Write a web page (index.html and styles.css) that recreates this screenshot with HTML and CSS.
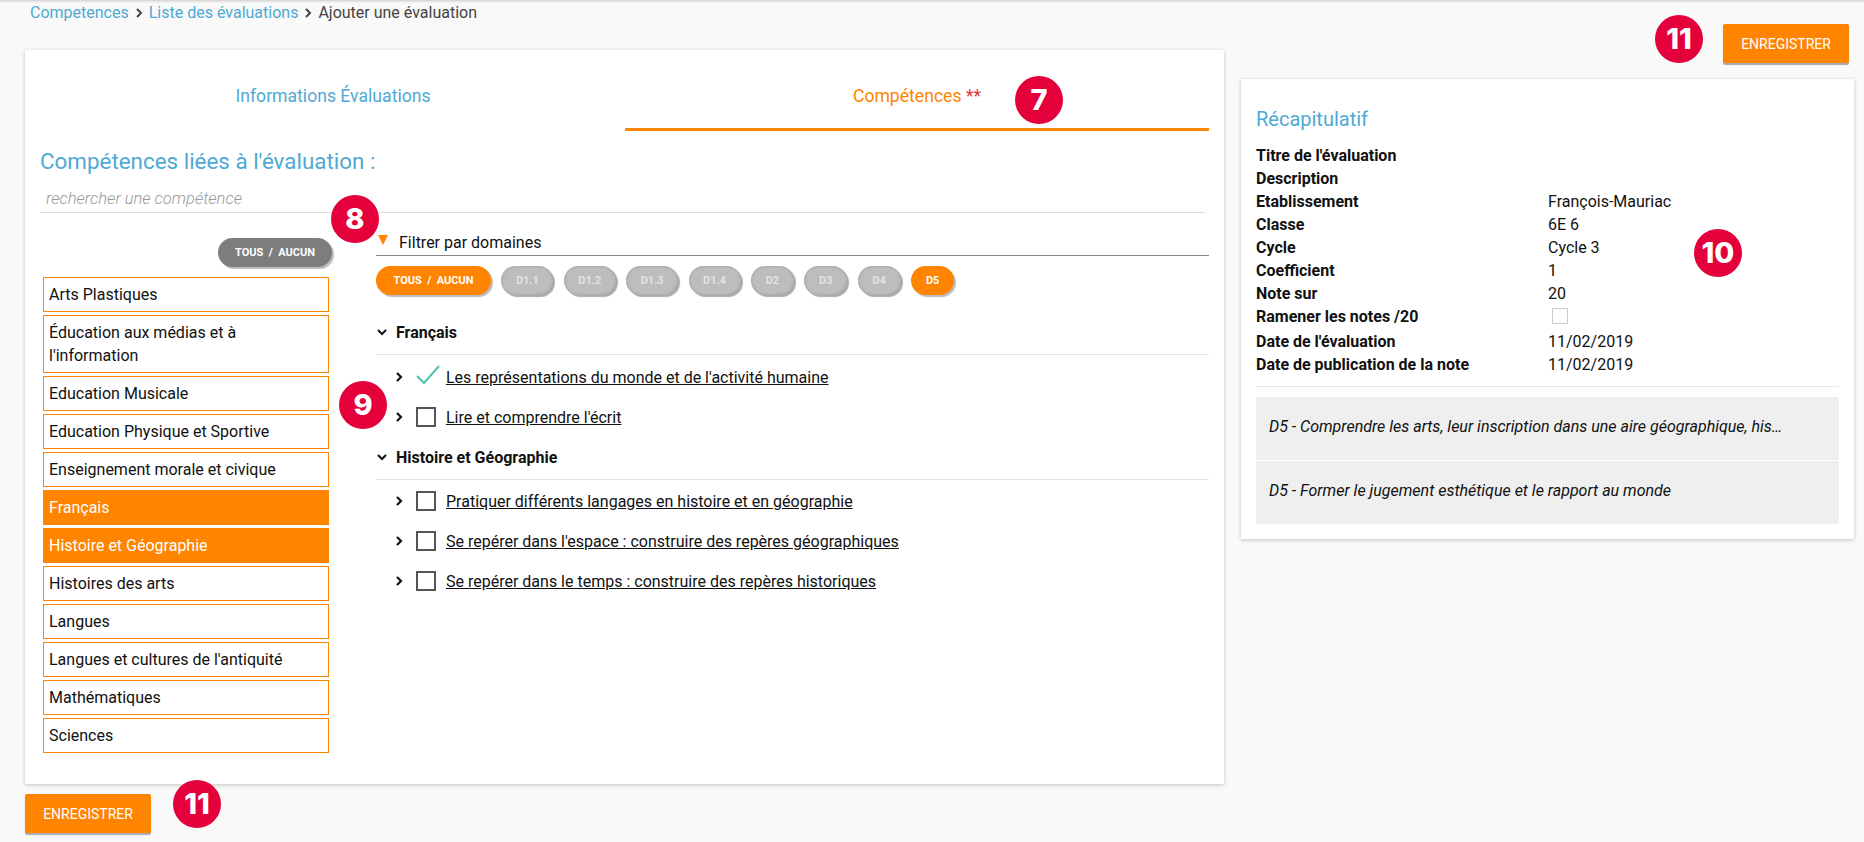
FILE: index.html
```html
<!DOCTYPE html>
<html>
  <head>
    <title>Ajouter une évaluation</title>
    <meta charset="UTF-8">
    <meta name="viewport" content="width=device-width, initial-scale=1.0">
    <link rel="stylesheet" href="styles.css">
  </head>
  <body>
    <div class="page">
      <div class="left-col">
        <div class="breadcrumb">
          <a href="#">Competences</a>
          <svg class="crumb-sep" viewBox="0 0 8 10"><path d="M2 1l4 4-4 4"/></svg>
          <a href="#">Liste des évaluations</a>
          <svg class="crumb-sep" viewBox="0 0 8 10"><path d="M2 1l4 4-4 4"/></svg>
          <span>Ajouter une évaluation</span>
        </div>

        <div class="card main-card">
          <div class="tabs">
            <div class="tab">Informations Évaluations</div>
            <div class="tab tab-active">Compétences <span class="stars">**</span></div>
          </div>

          <h2 class="section-title">Compétences liées à l'évaluation :</h2>
          <input class="search" type="text" placeholder="rechercher une compétence">

          <div class="columns">
            <div class="subjects">
              <div class="subjects-head">
                <button class="pill pill-dark">TOUS &nbsp;/&nbsp; AUCUN</button>
              </div>
              <ul class="subject-list">
                <li>Arts Plastiques</li>
                <li>Éducation aux médias et à l'information</li>
                <li>Education Musicale</li>
                <li>Education Physique et Sportive</li>
                <li>Enseignement morale et civique</li>
                <li class="selected">Français</li>
                <li class="selected">Histoire et Géographie</li>
                <li>Histoires des arts</li>
                <li>Langues</li>
                <li>Langues et cultures de l'antiquité</li>
                <li>Mathématiques</li>
                <li>Sciences</li>
              </ul>
            </div>

            <div class="domains">
              <div class="filter-head">
                <svg class="filter-arrow" viewBox="0 0 10 10"><path d="M0 0h10L5 10z"/></svg>
                Filtrer par domaines
              </div>
              <div class="pills">
                <button class="pill pill-on pill-all">TOUS &nbsp;/&nbsp; AUCUN</button>
                <button class="pill pill-off pill-long">D1.1</button>
                <button class="pill pill-off pill-long">D1.2</button>
                <button class="pill pill-off pill-long">D1.3</button>
                <button class="pill pill-off pill-long">D1.4</button>
                <button class="pill pill-off pill-short">D2</button>
                <button class="pill pill-off pill-short">D3</button>
                <button class="pill pill-off pill-short">D4</button>
                <button class="pill pill-on pill-short">D5</button>
              </div>

              <div class="group-head group-first">
                <svg class="chev-down" viewBox="0 0 10 7"><path d="M1 1l4 4 4-4"/></svg>
                Français
              </div>
              <div class="group-rows">
                <div class="row">
                  <svg class="chev-right" viewBox="0 0 7 10"><path d="M1 1l4 4-4 4"/></svg>
                  <svg class="check" viewBox="0 0 24 20"><path d="M1 11l7 7L23 1"/></svg>
                  <a href="#">Les représentations du monde et de l'activité humaine</a>
                </div>
                <div class="row">
                  <svg class="chev-right" viewBox="0 0 7 10"><path d="M1 1l4 4-4 4"/></svg>
                  <span class="box"></span>
                  <a href="#">Lire et comprendre l'écrit</a>
                </div>
              </div>

              <div class="group-head">
                <svg class="chev-down" viewBox="0 0 10 7"><path d="M1 1l4 4 4-4"/></svg>
                Histoire et Géographie
              </div>
              <div class="group-rows">
                <div class="row">
                  <svg class="chev-right" viewBox="0 0 7 10"><path d="M1 1l4 4-4 4"/></svg>
                  <span class="box"></span>
                  <a href="#">Pratiquer différents langages en histoire et en géographie</a>
                </div>
                <div class="row">
                  <svg class="chev-right" viewBox="0 0 7 10"><path d="M1 1l4 4-4 4"/></svg>
                  <span class="box"></span>
                  <a href="#">Se repérer dans l'espace : construire des repères géographiques</a>
                </div>
                <div class="row">
                  <svg class="chev-right" viewBox="0 0 7 10"><path d="M1 1l4 4-4 4"/></svg>
                  <span class="box"></span>
                  <a href="#">Se repérer dans le temps : construire des repères historiques</a>
                </div>
              </div>
            </div>
          </div>
        </div>

        <button class="save save-bottom">ENREGISTRER</button>
      </div>

      <div class="right-col">
        <div class="save-bar">
          <button class="save">ENREGISTRER</button>
        </div>
        <div class="card recap">
          <h3 class="recap-title">Récapitulatif</h3>
          <div class="recap-grid">
            <b>Titre de l'évaluation</b><span></span>
            <b>Description</b><span></span>
            <b>Etablissement</b><span>François-Mauriac</span>
            <b>Classe</b><span>6E 6</span>
            <b>Cycle</b><span>Cycle 3</span>
            <b>Coefficient</b><span>1</span>
            <b>Note sur</b><span>20</span>
            <b>Ramener les notes /20</b><span><i class="mini-box"></i></span>
            <b>Date de l'évaluation</b><span>11/02/2019</span>
            <b>Date de publication de la note</b><span>11/02/2019</span>
          </div>
          <div class="recap-items">
            <div class="recap-item">D5 - Comprendre les arts, leur inscription dans une aire géographique, his…</div>
            <div class="recap-item">D5 - Former le jugement esthétique et le rapport au monde</div>
          </div>
        </div>
      </div>

      <div class="badge badge-7">7</div>
      <div class="badge badge-8">8</div>
      <div class="badge badge-9">9</div>
      <div class="badge badge-10">10</div>
      <div class="badge badge-11a">11</div>
      <div class="badge badge-11b">11</div>
    </div>
  </body>
</html>
```

FILE: styles.css
```css
/* Ajouter une evaluation - competences */
* {
  box-sizing: border-box;
}

html,
body {
  margin: 0;
  padding: 0;
  height: 100%;
}

body {
  font-family: Roboto, Arial, sans-serif;
  font-size: 16px;
  color: #111;
  background-color: #f9f9f9;
  overflow: hidden;
}

a {
  color: inherit;
}

button {
  font-family: inherit;
  border: none;
  cursor: pointer;
}

.page {
  position: relative;
  display: flex;
  gap: 17px;
  height: 842px;
  padding-left: 25px;
  box-shadow: inset 0 3px 3px -2px rgba(0, 0, 0, 0.2);
}

.left-col {
  width: 1199px;
}

.right-col {
  width: 613px;
}

/* Breadcrumb */
.breadcrumb {
  display: flex;
  align-items: center;
  height: 50px;
  padding: 0 0 26px 5px;
  color: #444;
  font-size: 16px;
}

.breadcrumb a {
  color: #4fa9d3;
  text-decoration: none;
}

.crumb-sep {
  width: 8px;
  height: 10px;
  margin: 2px 6px 0 6px;
  fill: none;
  stroke: #444;
  stroke-width: 2;
}

/* Cards */
.card {
  background-color: #fff;
  box-shadow: 0 1px 4px rgba(0, 0, 0, 0.22);
}

.main-card {
  height: 734px;
  padding: 0 15px;
}

/* Tabs */
.tabs {
  display: flex;
  margin: 0 0 0 1px;
}

.tab {
  width: 584px;
  height: 81px;
  padding-top: 36px;
  text-align: center;
  font-size: 17.6px;
  line-height: 21px;
  color: #4fa9d3;
}

.tab-active {
  color: #ff8400;
  border-bottom: 3px solid #ff8400;
}

.stars {
  color: #e03a3a;
}

.section-title {
  margin: 17px 0 0;
  font-size: 22.4px;
  line-height: 26px;
  font-weight: 400;
  color: #4fa9d3;
}

.search {
  display: block;
  width: 1165px;
  height: 33px;
  margin-top: 6px;
  padding: 4px 6px 0;
  border: none;
  border-bottom: 1px solid #ddd;
  outline: none;
  font-family: inherit;
  font-size: 16.5px;
  font-style: italic;
  font-weight: 300;
}

.search::placeholder {
  color: #999;
  opacity: 1;
}

.columns {
  display: flex;
}

/* Subject list */
.subjects {
  width: 292px;
  margin-left: 3px;
  padding-top: 25px;
}

.subjects-head {
  display: flex;
  justify-content: flex-end;
  width: 289px;
}

.subject-list {
  display: flex;
  flex-direction: column;
  gap: 3px;
  width: 286px;
  margin: 10px 0 0;
  padding: 0;
  list-style: none;
}

.subject-list li {
  padding: 5px;
  border: 1px solid #ff8400;
  line-height: 23px;
  color: #111;
}

.subject-list .selected {
  background-color: #ff8400;
  color: #fff;
}

/* Pills */
.pill {
  height: 29px;
  padding: 0;
  border-radius: 15px;
  font-size: 11px;
  font-weight: 700;
  color: #fff;
  box-shadow: 2px 2px 1px #bbb;
}

.pill-dark {
  width: 114px;
  background-color: #7d7d7d;
}

.pill-on {
  background-color: #ff8400;
}

.pill-all {
  width: 115px;
}

.pill-long {
  width: 52px;
}

.pill-short {
  width: 43px;
}

.pill-off {
  background-color: #bdbdbd;
  color: #e2e2e2;
  box-shadow: 2px 2px 1px #aaa, inset 0 0 3px #999;
}

/* Domains */
.domains {
  width: 833px;
  margin-left: 41px;
  padding-top: 16px;
}

.filter-head {
  display: flex;
  align-items: center;
  height: 27px;
  padding: 0 0 0 2px;
  border-bottom: 1px solid #888;
  line-height: 23px;
  color: #111;
}

.filter-arrow {
  width: 10px;
  height: 10px;
  margin: -4px 11px 0 0;
  fill: #ff8400;
}

.pills {
  display: flex;
  gap: 10.4px;
  margin-top: 10px;
}

.group-head {
  display: flex;
  align-items: center;
  height: 43px;
  padding: 0 0 1px 1px;
  border-bottom: 1px solid #e3e3e3;
  font-weight: 700;
}

.group-first {
  height: 46px;
  margin-top: 14px;
  margin-bottom: 1px;
  padding: 1px 0 0 1px;
}

.chev-down {
  width: 10px;
  height: 7px;
  margin-right: 9px;
  fill: none;
  stroke: #111;
  stroke-width: 2;
}

.group-rows {
  padding-top: 1px;
}

.row {
  display: flex;
  align-items: center;
  height: 40px;
  padding-left: 20px;
}

.row a {
  color: #111;
}

.chev-right {
  width: 7px;
  height: 10px;
  margin-right: 13px;
  fill: none;
  stroke: #111;
  stroke-width: 2.2;
}

.box {
  width: 20px;
  height: 20px;
  margin-right: 10px;
  border: 2px solid #555;
}

.check {
  width: 24px;
  height: 20px;
  margin: -4px 6px 0 0;
  fill: none;
  stroke: #4fc0ab;
  stroke-width: 2;
}

/* Save buttons */
.save {
  display: block;
  width: 126px;
  height: 39px;
  padding: 0;
  border-radius: 2px;
  background-color: #ff8400;
  color: #fff;
  font-size: 14px;
  box-shadow: 0 2px 1px #aaa;
}

.save-bottom {
  margin-top: 10px;
}

.save-bar {
  display: flex;
  justify-content: flex-end;
  height: 79px;
  padding: 24px 5px 0 0;
}

/* Recap */
.recap {
  height: 460px;
  padding: 27px 15px 0;
}

.recap-title {
  margin: 0;
  font-size: 20px;
  line-height: 26px;
  font-weight: 400;
  color: #4fa9d3;
}

.recap-grid {
  display: grid;
  grid-template-columns: 292px 1fr;
  grid-template-rows: repeat(7, 23px) 25px repeat(2, 23px);
  margin-top: 12px;
  padding-bottom: 10px;
  border-bottom: 1px solid #e8e8e8;
  line-height: 23px;
}

.mini-box {
  display: block;
  width: 16px;
  height: 16px;
  margin: 3px 0 0 4px;
  border: 1px solid #ccc;
}

.recap-items {
  margin-top: 10px;
}

.recap-item {
  height: 63px;
  padding: 0 13px;
  margin-bottom: 1px;
  background-color: #efefef;
  font-style: italic;
  line-height: 60px;
  white-space: nowrap;
}

/* Numbered markers */
.badge {
  position: absolute;
  width: 48px;
  height: 48px;
  border-radius: 50%;
  background-color: #e4003a;
  color: #fff;
  font-family: Inter, Roboto, sans-serif;
  font-size: 29px;
  font-weight: 800;
  line-height: 48px;
  text-align: center;
}

.badge-7 {
  left: 1015px;
  top: 76px;
}

.badge-8 {
  left: 331px;
  top: 195px;
}

.badge-9 {
  left: 339px;
  top: 381px;
}

.badge-10 {
  left: 1694px;
  top: 229px;
}

.badge-11a {
  left: 1655px;
  top: 15px;
}

.badge-11b {
  left: 173px;
  top: 780px;
}
```
